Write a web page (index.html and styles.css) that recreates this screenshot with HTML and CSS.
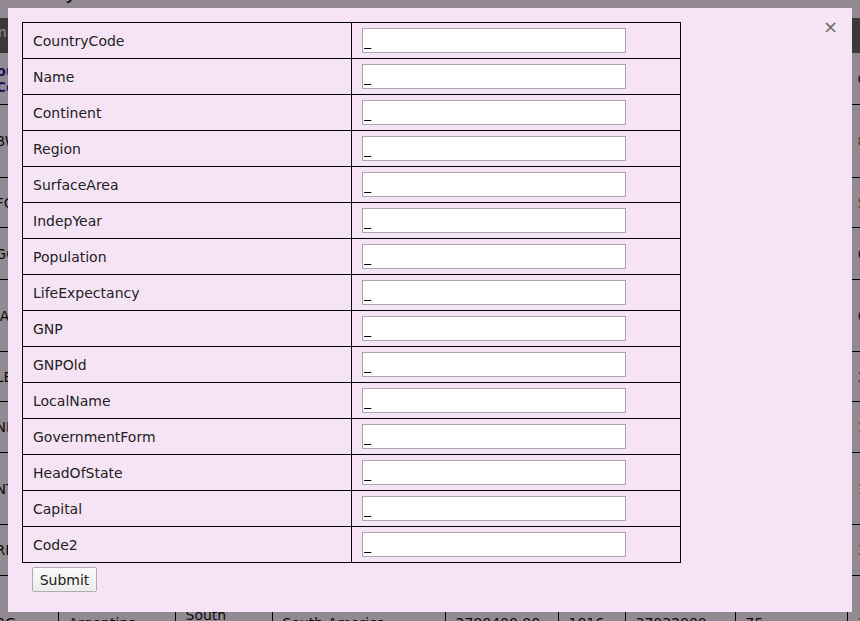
FILE: index.html
```html
<!DOCTYPE html>
<html>
<head>
<meta charset="utf-8">
<link rel="stylesheet" href="styles.css">
</head>
<body>
<div class="page">
  <div class="title">Country</div>
  <div class="bar"><span class="bar-btn">Columns</span></div>
  <table class="bg-table">
    <colgroup>
      <col class="c1"><col class="c2"><col class="c3"><col class="c4"><col class="c5"><col class="c6"><col class="c7"><col class="c8"><col class="c9">
    </colgroup>
    <thead>
      <tr class="h-head"><th>Country<br>&nbsp;&nbsp;Code</th><th>Name</th><th>Continent</th><th>Region</th><th>SurfaceArea</th><th>IndepYear</th><th>Population</th><th>LifeExp</th><th>GNP</th></tr>
    </thead>
    <tbody>
      <tr class="h73"><td>ABW</td><td>Aruba</td><td>North America</td><td>Caribbean</td><td>193.00</td><td></td><td>103000</td><td>78</td><td class="o">828.00</td></tr>
      <tr class="h50"><td>AFG</td><td>Afghanistan</td><td>Asia</td><td>Southern Asia</td><td>652090.00</td><td>1919</td><td>22720000</td><td>45</td><td class="o">5976.00</td></tr>
      <tr class="h52"><td>AGO</td><td>Angola</td><td>Africa</td><td>Central Africa</td><td>1246700.00</td><td>1975</td><td>12878000</td><td>38</td><td class="b">6648.00</td></tr>
      <tr class="h72"><td>AIA</td><td>Anguilla</td><td>North America</td><td>Caribbean</td><td>96.00</td><td></td><td>8000</td><td>76</td><td class="b">63.20</td></tr>
      <tr class="h50"><td>ALB</td><td>Albania</td><td>Europe</td><td>Southern Europe</td><td>28748.00</td><td>1912</td><td>3401200</td><td>71</td><td class="b">3205.00</td></tr>
      <tr class="h51"><td>AND</td><td>Andorra</td><td>Europe</td><td>Southern Europe</td><td>468.00</td><td>1278</td><td>78000</td><td>83</td><td class="o">1630.00</td></tr>
      <tr class="h72"><td>ANT</td><td>Antilles</td><td>North America</td><td>Caribbean</td><td>800.00</td><td></td><td>217000</td><td>74</td><td class="o">1941.00</td></tr>
      <tr class="h51"><td>ARE</td><td>Emirates</td><td>Asia</td><td>Middle East</td><td>83600.00</td><td>1971</td><td>2441000</td><td>74</td><td class="o">37966.00</td></tr>
      <tr class="h94"><td>ARG</td><td>Argentina</td><td>South America</td><td>South America</td><td>2780400.00</td><td>1816</td><td>37032000</td><td>75</td><td class="o">340238.00</td></tr>
    </tbody>
  </table>
</div>

<div class="overlay"></div>

<div class="modal">
  <span class="close">×</span>
  <form class="form">
    <table class="fields">
      <tr><td class="label">CountryCode</td><td class="field"><input type="text" value="_"></td></tr>
      <tr><td class="label">Name</td><td class="field"><input type="text" value="_"></td></tr>
      <tr><td class="label">Continent</td><td class="field"><input type="text" value="_"></td></tr>
      <tr><td class="label">Region</td><td class="field"><input type="text" value="_"></td></tr>
      <tr><td class="label">SurfaceArea</td><td class="field"><input type="text" value="_"></td></tr>
      <tr><td class="label">IndepYear</td><td class="field"><input type="text" value="_"></td></tr>
      <tr><td class="label">Population</td><td class="field"><input type="text" value="_"></td></tr>
      <tr><td class="label">LifeExpectancy</td><td class="field"><input type="text" value="_"></td></tr>
      <tr><td class="label">GNP</td><td class="field"><input type="text" value="_"></td></tr>
      <tr><td class="label">GNPOld</td><td class="field"><input type="text" value="_"></td></tr>
      <tr><td class="label">LocalName</td><td class="field"><input type="text" value="_"></td></tr>
      <tr><td class="label">GovernmentForm</td><td class="field"><input type="text" value="_"></td></tr>
      <tr><td class="label">HeadOfState</td><td class="field"><input type="text" value="_"></td></tr>
      <tr><td class="label">Capital</td><td class="field"><input type="text" value="_"></td></tr>
      <tr><td class="label">Code2</td><td class="field"><input type="text" value="_"></td></tr>
    </table>
    <button type="button" class="submit">Submit</button>
  </form>
</div>
</body>
</html>
```

FILE: styles.css
```css
html, body {
  margin: 0;
  padding: 0;
  overflow: hidden;
  background: #f6e4f6;
  font-family: "DejaVu Sans", Verdana, sans-serif;
}

.page {
  width: 860px;
  height: 621px;
  overflow: hidden;
}

.title {
  height: 18px;
  font-family: "Liberation Sans", Arial, sans-serif;
  font-size: 22px;
  line-height: 22px;
  margin-top: -20px;
  padding-bottom: 20px;
  color: #111;
  white-space: nowrap;
}

.bar {
  height: 35px;
  background: #626262;
  display: flex;
  align-items: center;
  margin-left: -38px;
}

.bar-btn {
  color: #eee;
  font-size: 14px;
  margin-top: -8px;
}

.bg-table {
  border-collapse: collapse;
  margin-left: -30px;
  table-layout: fixed;
  width: 1027px;
  font-size: 14px;
  color: #111;
}

.c1 { width: 88px; }
.c2 { width: 117px; }
.c3 { width: 97px; }
.c4 { width: 173px; }
.c5 { width: 113px; }
.c6 { width: 67px; }
.c7 { width: 110px; }
.c8 { width: 112px; }
.c9 { width: 150px; }

.bg-table th, .bg-table td {
  border-top: 1px solid #000;
  border-bottom: 1px solid #000;
  border-left: 1px solid #000;
  padding: 0 10px;
  text-align: left;
  vertical-align: middle;
  overflow: hidden;
}

.bg-table th {
  color: #1c2f8a;
  font-weight: bold;
  height: 51px;
  border-top: none;
  white-space: nowrap;
}

.bg-table td:first-child, .bg-table th:first-child {
  border-left: none;
  padding-left: 16px;
}

.h73 td { height: 72px; }
.h72 td { height: 71px; }
.h52 td { height: 51px; }
.h51 td { height: 50px; }
.h50 td { height: 49px; }
.h94 td { height: 94px; }

.bg-table .o { color: #b0601a; }
.bg-table .b { color: #1c2f8a; }

.overlay {
  position: fixed;
  inset: 0;
  background: rgba(0, 0, 0, 0.4);
}

.modal {
  position: fixed;
  left: 8px;
  top: 8px;
  width: 844px;
  height: 604px;
  background: #f6e4f6;
  box-sizing: border-box;
  padding: 14px;
}

.close {
  position: absolute;
  top: 7px;
  right: 14px;
  font-size: 18px;
  color: #6a6a6a;
  line-height: 24px;
}

.fields {
  border-collapse: collapse;
  width: 659px;
  table-layout: fixed;
  border: 1px solid #000;
}

.fields td {
  border: 1px solid #000;
  padding: 5px 10px;
  height: 25px;
  font-size: 14px;
  color: #222;
  vertical-align: middle;
}

.fields input {
  display: block;
  width: 264px;
  height: 25px;
  box-sizing: border-box;
  border: 1px solid #a9a9a9;
  padding: 0 1px;
  margin: 0;
  font-family: "DejaVu Sans", Verdana, sans-serif;
  font-size: 14px;
  color: #000;
  background: #fff;
}

.submit {
  display: block;
  margin: 4px 0 0 10px;
  width: 65px;
  height: 25px;
  padding: 0;
  font-family: "DejaVu Sans", Verdana, sans-serif;
  font-size: 14px;
  color: #222;
  background: linear-gradient(#fbfbfb, #ececec);
  border: 1px solid #adadad;
  border-radius: 2px;
}
```
